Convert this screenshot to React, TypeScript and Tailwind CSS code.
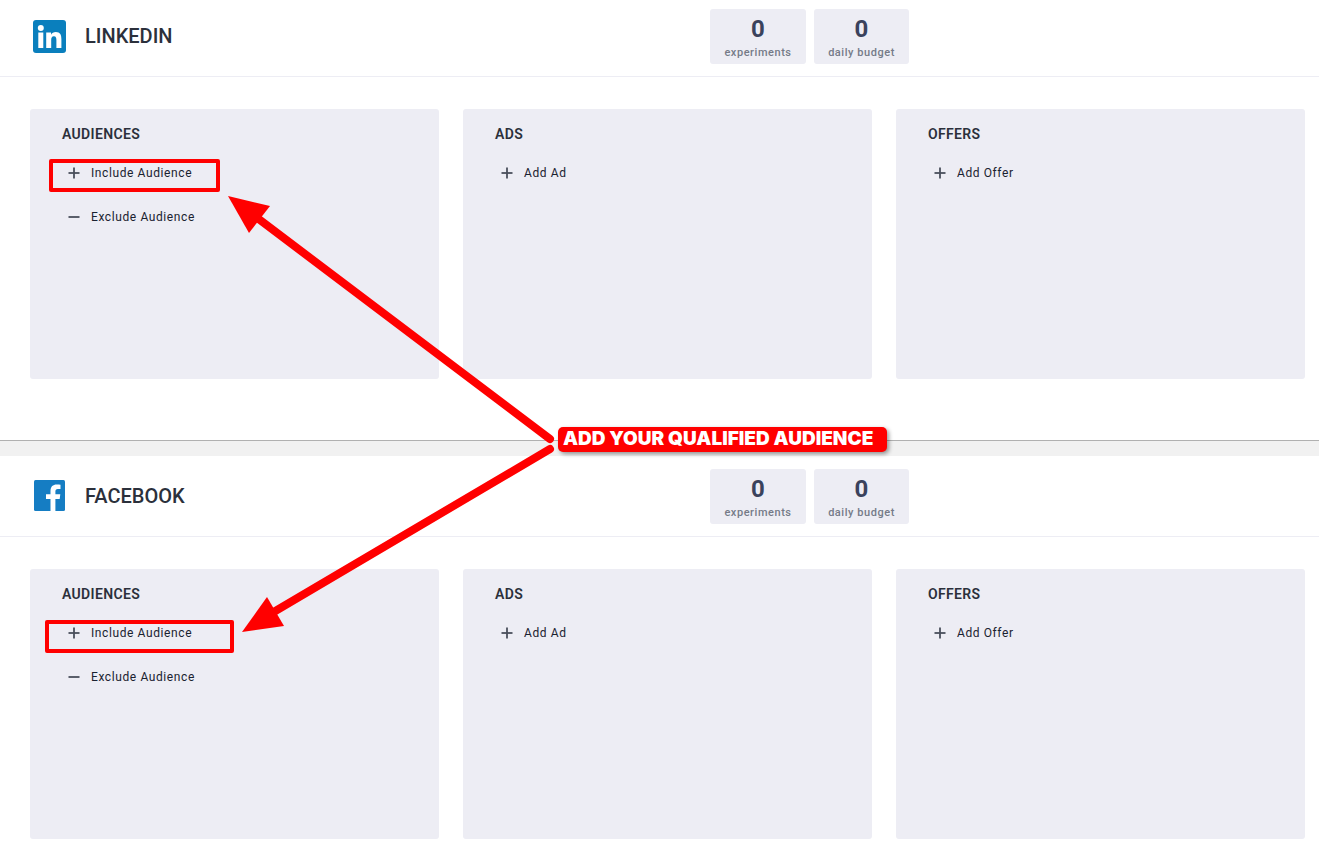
import { clsx } from "clsx";
import { ReactNode } from "react";

const LinkedInLogo = () => (
    <svg viewBox="0 0 34 34" className="w-[34px] h-[34px] shrink-0" aria-hidden="true">
        <rect x="1" y="1" width="33" height="33" rx="3" fill="#0a7fbd" />
        <circle cx="8.8" cy="8.9" r="3" fill="#fff" />
        <path
            fill="#fff"
            d="M6.3 13.5h5V29h-5zM14.2 13.5H19v2.2c.9-1.6 2.6-2.6 4.8-2.6 4.5 0 5.6 2.9 5.6 7.2V29h-5v-7.8c0-2-.3-3.9-2.5-3.9s-2.7 1.8-2.7 3.8V29h-5z"
        />
    </svg>
);

const FacebookLogo = () => (
    <svg viewBox="0 0 34 34" className="w-[34px] h-[34px] shrink-0" aria-hidden="true">
        <rect x="2" y="1" width="31" height="31" rx="1.5" fill="#157dc3" />
        <path
            fill="#fff"
            d="M18.5 32V20H14v-4.7h4.5v-3.4c0-4.2 2.4-6.4 6.2-6.4 1.5 0 2.9.1 3.8.2v4.2h-2.6c-2 0-2.5 1-2.5 2.4v3h4.9L27.7 20h-4.3v12z"
        />
    </svg>
);

const Stat = ({ value, label, className }: { value: number; label: string; className: string }) => (
    <div className={clsx("flex flex-col items-center rounded-[3px] bg-[#ededf4] h-[55px] pt-1", className)}>
        <span className="text-2xl leading-8 font-bold text-[#3a425c]">{value}</span>
        <span className="text-[11px] leading-4 font-medium tracking-wider text-[#757b88]">{label}</span>
    </div>
);

const Action = ({ sign, children }: { sign: "plus" | "minus"; children: ReactNode }) => (
    <button type="button" className="flex items-center gap-[11px] h-11 pl-1.5 text-xs tracking-wider text-[#1a2230]">
        <svg viewBox="0 0 12 12" className="w-3 h-3" fill="#4a4f5c" aria-hidden="true">
            <rect x="0.5" y="5.1" width="11" height="1.8" />
            {sign === "plus" && <rect x="5.1" y="0.5" width="1.8" height="11" />}
        </svg>
        {children}
    </button>
);

const Panel = ({ title, children }: { title: string; children: ReactNode }) => (
    <section className="flex flex-col items-start min-h-[270px] rounded-[3px] bg-[#ededf4] pl-8 pt-[15px]">
        <h3 className="text-sm leading-5 font-semibold tracking-wide text-[#2b303b] mb-[7px]">{title}</h3>
        {children}
    </section>
);

const Channel = ({ name, logo, className }: { name: string; logo: ReactNode; className?: string }) => (
    <div className={clsx("bg-white", className)}>
        <header className="flex items-center h-[81px] pl-8 border-b border-[#ededf4]">
            {logo}
            <h2 className="ml-[19px] text-xl font-medium text-[#2b303b]">{name}</h2>
            <div className="flex gap-2 ml-auto mr-[410px]">
                <Stat value={0} label="experiments" className="w-24" />
                <Stat value={0} label="daily budget" className="w-[95px]" />
            </div>
        </header>
        <div className="grid grid-cols-3 gap-6 mt-8 ml-[30px] mr-3.5">
            <Panel title="AUDIENCES">
                <Action sign="plus">Include Audience</Action>
                <Action sign="minus">Exclude Audience</Action>
            </Panel>
            <Panel title="ADS">
                <Action sign="plus">Add Ad</Action>
            </Panel>
            <Panel title="OFFERS">
                <Action sign="plus">Add Offer</Action>
            </Panel>
        </div>
    </div>
);

const Annotations = () => (
    <div className="absolute inset-0 pointer-events-none">
        <svg width="900" height="700" viewBox="0 0 900 700" className="absolute left-0 top-0" aria-hidden="true">
            <g fill="none" stroke="#f00" strokeWidth="4" strokeLinejoin="round">
                <rect x="51" y="161" width="167" height="29" />
                <rect x="47" y="622" width="185" height="29" />
            </g>
            <g stroke="#f00" strokeWidth="8" strokeLinecap="round">
                <path d="M550 439 L256 217" />
                <path d="M550 449 L272 613" />
            </g>
            <path d="M228 196 L270 206 L249 233z" fill="#f00" />
            <path d="M242 632 L267 597 L284 626z" fill="#f00" />
        </svg>
        <div className="absolute left-[558px] top-[427px] w-[329px] h-[25px] pl-[5px] rounded-[5px] bg-[#f00] shadow-[2px_2px_4px_rgba(0,0,0,0.4)] font-['Inter',sans-serif] text-[19px] leading-6 font-black text-white whitespace-nowrap">
            ADD YOUR QUALIFIED AUDIENCE
        </div>
    </div>
);

const App = () => {
    return (
        <main className="relative overflow-hidden bg-white font-['Roboto',sans-serif]">
            <Channel name="LINKEDIN" logo={<LinkedInLogo />} className="-mt-1 pb-[61px]" />
            <div className="h-4 bg-[#f1f1f1] border-t border-[#b0b0b0]" />
            <Channel name="FACEBOOK" logo={<FacebookLogo />} className="pb-3" />
            <Annotations />
        </main>
    );
};

export default App;
